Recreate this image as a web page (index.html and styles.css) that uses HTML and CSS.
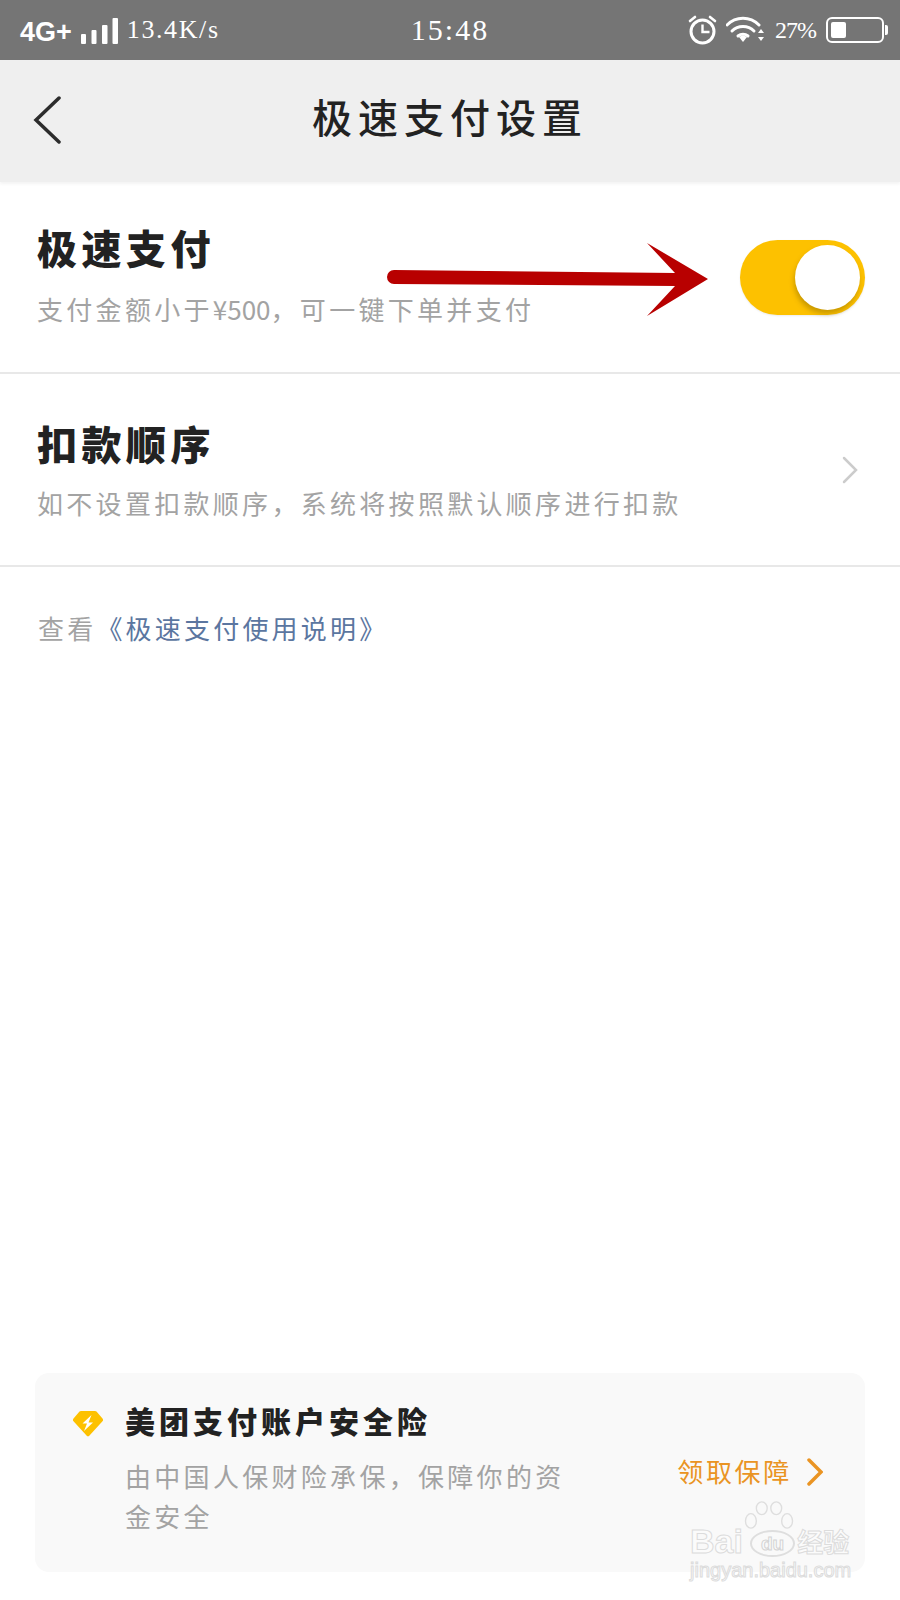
FILE: index.html
```html
<!DOCTYPE html>
<html lang="zh-CN">
  <head>
    <meta charset="UTF-8" />
    <meta name="viewport" content="width=device-width, initial-scale=1.0" />
    <title>极速支付设置</title>
    <link rel="stylesheet" href="styles.css">
  </head>
  <body>
    <!-- Status bar -->
    <div class="status-bar">
      <div class="status-left">
        <span class="network">4G+</span>
        <svg class="signal" width="37" height="26" viewBox="0 0 37 26">
          <rect x="0" y="16" width="5" height="10" rx="1" />
          <rect x="10.500" y="12" width="5" height="14" rx="1" />
          <rect x="21" y="7" width="5.500" height="19" rx="1" />
          <rect x="31.500" y="0" width="5.500" height="26" rx="1" />
        </svg>
        <span class="speed">13.4K/s</span>
      </div>
      <div class="clock">15:48</div>
      <div class="status-right">
        <svg class="alarm" width="29" height="30" viewBox="0 0 29 30" fill="none" stroke="#fff">
          <circle cx="14.5" cy="16.5" r="11.5" stroke-width="3" />
          <path d="M14.5 9.5v7.5h7" stroke-width="2.4" />
          <path d="M2 6l5-4M27 6l-5-4" stroke-width="2.6" stroke-linecap="round" />
        </svg>
        <svg class="wifi" width="38" height="28" viewBox="0 0 38 28" fill="none" stroke="#fff">
          <path d="M1 9c9-9 23-9 32 0" stroke-width="3" stroke-linecap="round" />
          <path d="M6 15c6-6 16-6 22 0" stroke-width="3" stroke-linecap="round" />
          <path d="M12 20c3-2.500 7-2.500 10 0" stroke-width="3" stroke-linecap="round" />
          <path d="M13 21l4-2 4 2-4 5z" fill="#fff" stroke="none" />
          <path d="M32 17l3-4 3 4zM32 21l3 4 3-4z" fill="#fff" stroke="none" />
        </svg>
        <span class="battery-text">27%</span>
        <div class="battery">
          <div class="battery-level"></div>
        </div>
      </div>
    </div>

    <!-- Title bar -->
    <div class="title-bar">
      <svg class="back" width="30" height="48" viewBox="0 0 30 48" fill="none" stroke="#2c2c2c" stroke-width="3.500" stroke-linecap="round">
        <path d="M26 2L3 24l23 22" />
      </svg>
      <h1>极速支付设置</h1>
    </div>

    <div class="setting-row row-first">
      <div>
        <div class="setting-title">极速支付</div>
        <div class="setting-desc">支付金额小于<span class="amount">¥500</span>，可一键下单并支付</div>
      </div>
      <div class="switch">
        <div class="knob"></div>
      </div>
    </div>

    <div class="setting-row row-second">
      <div>
        <div class="setting-title">扣款顺序</div>
        <div class="setting-desc">如不设置扣款顺序，系统将按照默认顺序进行扣款</div>
      </div>
      <svg class="row-arrow" width="16" height="28" viewBox="0 0 16 28" fill="none" stroke="#cccccc" stroke-width="2.500" stroke-linecap="round">
        <path d="M2 2l12 12L2 26" />
      </svg>
    </div>

    <div class="help-line">查看<a class="help-link">《极速支付使用说明》</a></div>

    <!-- Insurance card -->
    <div class="insure-card">
      <div class="insure-main">
        <div class="insure-head">
          <svg class="shield" width="32" height="27" viewBox="0 0 32 27">
            <path d="M9 1h14a2 2 0 0 1 1.500.6l6 7a2 2 0 0 1 0 2.600L17.500 25.500a2 2 0 0 1-3 0L1.500 11.200a2 2 0 0 1 0-2.600l6-7A2 2 0 0 1 9 1z" fill="#fdc100" />
            <path d="M19.500 5l-9 8.500h4.500l-3 7.500 9-8.500h-4.500z" fill="#fff" />
          </svg>
          <span class="insure-title">美团支付账户安全险</span>
        </div>
        <div class="insure-desc">由中国人保财险承保，保障你的资金安全</div>
      </div>
      <div class="insure-action">
        <span>领取保障</span>
        <svg class="action-arrow" width="16" height="30" viewBox="0 0 16 30" fill="none" stroke="#ea9423" stroke-width="3.500" stroke-linecap="round">
          <path d="M2 3l12 12L2 27" />
        </svg>
      </div>
    </div>

    <!-- Annotation arrow drawn over the screenshot -->
    <svg class="annotation" width="900" height="400" viewBox="0 0 900 400">
      <path d="M394 270L675 273L647 243L708 279L647 316L675 286L394 284a7 7 0 0 1 0-14z" fill="#b80000" />
    </svg>

    <!-- Watermark -->
    <div class="watermark">
      <svg class="paw" width="54" height="38" viewBox="0 0 56 42" fill="none" stroke="#dedede" stroke-width="1.500">
        <ellipse cx="8" cy="22" rx="6" ry="8" />
        <ellipse cx="20" cy="8" rx="6" ry="7" />
        <ellipse cx="36" cy="8" rx="6" ry="7" />
        <ellipse cx="48" cy="22" rx="6" ry="8" />
      </svg>
      <div class="wm-brand"><span>Bai</span><span class="wm-du">du</span><span class="wm-cn">经验</span></div>
      <div class="wm-url">jingyan.baidu.com</div>
    </div>
  </body>
</html>
```

FILE: styles.css
```css
* {
  box-sizing: border-box;
}

body {
  margin: 0;
  padding: 0;
  width: 900px;
  height: 1600px;
  position: relative;
  overflow: hidden;
  display: flex;
  flex-direction: column;
  background-color: #fff;
  font-family: "Noto Sans CJK SC", "Noto Sans", sans-serif;
}

/* Status bar */
.status-bar {
  height: 60px;
  flex-shrink: 0;
  padding: 0 14px;
  display: grid;
  grid-template-columns: 1fr auto 1fr;
  align-items: center;
  background-color: #757575;
  color: #fff;
}

.status-left,
.status-right {
  display: flex;
  align-items: center;
}

.status-right {
  justify-content: flex-end;
}

.network {
  margin-left: 6px;
  margin-top: 4px;
  font-family: "Liberation Sans", sans-serif;
  font-size: 27px;
  font-weight: bold;
}

.signal {
  fill: #fff;
  margin-left: 9px;
  margin-top: 2px;
}

.speed {
  font-family: "Liberation Serif", serif;
  font-size: 26px;
  margin-left: 9px;
  letter-spacing: 1.6px;
}

.clock {
  font-family: "Liberation Serif", serif;
  font-size: 30px;
  letter-spacing: 2px;
}

.wifi {
  margin-left: 9px;
}

.battery-text {
  font-family: "Liberation Serif", serif;
  font-size: 24px;
  letter-spacing: -1px;
  margin-left: 11px;
}

.battery {
  width: 58px;
  height: 26px;
  margin-left: 10px;
  margin-right: 2px;
  padding: 3px;
  position: relative;
  border: 2px solid #fff;
  border-radius: 6px;
}

.battery::after {
  content: "";
  position: absolute;
  right: -6px;
  top: 6px;
  width: 3px;
  height: 10px;
  border-radius: 0 2px 2px 0;
  background-color: #fff;
}

.battery-level {
  width: 15px;
  height: 100%;
  border-radius: 2px;
  background-color: #fff;
}

/* Title bar */
.title-bar {
  height: 122px;
  flex-shrink: 0;
  position: relative;
  display: flex;
  align-items: center;
  justify-content: center;
  padding-bottom: 10px;
  background-color: #efefef;
  box-shadow: 0 2px 3px rgba(0, 0, 0, 0.05);
}

.title-bar h1 {
  margin: 0;
  font-size: 40px;
  font-weight: 500;
  letter-spacing: 6px;
  color: #222;
}

.back {
  position: absolute;
  left: 33px;
  top: 36px;
}

/* Setting rows */
.setting-row {
  display: flex;
  align-items: flex-start;
  justify-content: space-between;
  border-bottom: 2px solid #e8e8e8;
}

.row-first {
  height: 192px;
  padding: 37px 35px 0 37px;
}

.row-first .setting-desc {
  margin-top: 17px;
}

.row-second {
  height: 193px;
  padding: 41px 42px 0 37px;
}

.setting-title {
  font-size: 40px;
  font-weight: 900;
  line-height: 56px;
  letter-spacing: 4.5px;
  color: #222;
}

.setting-desc {
  margin-top: 15px;
  font-size: 26px;
  line-height: 34px;
  letter-spacing: 3.3px;
  color: #a3a3a3;
}

.amount {
  letter-spacing: 0;
}

.switch {
  width: 125px;
  height: 75px;
  margin-top: 21px;
  padding: 5px;
  display: flex;
  justify-content: flex-end;
  border-radius: 38px;
  background-color: #fdc100;
  box-shadow: 0 1px 2px rgba(0, 0, 0, 0.08);
}

.knob {
  width: 65px;
  height: 65px;
  border-radius: 50%;
  background-color: #fff;
  box-shadow: -1px 4px 5px rgba(110, 80, 0, 0.35);
}

.row-arrow {
  margin-top: 41px;
}

.help-line {
  margin-top: 43px;
  padding-left: 38px;
  font-size: 26px;
  line-height: 36px;
  letter-spacing: 3.2px;
  color: #a3a3a3;
}

.help-link {
  color: #5b76a0;
}

/* Insurance card */
.insure-card {
  margin: auto 35px 28px;
  height: 199px;
  padding: 26px 42px 0 37px;
  display: flex;
  justify-content: space-between;
  border-radius: 14px;
  background-color: #f9f9f9;
}

.insure-main {
  width: 500px;
}

.insure-head {
  display: flex;
  align-items: center;
  gap: 21px;
}

.shield {
  margin-top: 6px;
}

.insure-title {
  font-size: 30px;
  font-weight: 900;
  line-height: 42px;
  letter-spacing: 4px;
  color: #222;
}

.insure-desc {
  margin-top: 15px;
  padding-left: 53px;
  font-size: 26px;
  line-height: 40px;
  letter-spacing: 3.3px;
  color: #a3a3a3;
}

.insure-action {
  margin-top: 53px;
  height: 36px;
  display: flex;
  align-items: center;
  gap: 15px;
  font-size: 26px;
  letter-spacing: 2.7px;
  color: #ea9423;
}

.action-arrow {
  margin-top: 4px;
}

/* Things lying over the page */
.annotation {
  position: absolute;
  left: 0;
  top: 0;
}

.watermark {
  position: absolute;
  left: 688px;
  top: 1500px;
  width: 170px;
  height: 82px;
}

.paw {
  position: absolute;
  left: 54px;
  top: 1px;
}

.wm-brand {
  position: absolute;
  left: 2px;
  top: 27px;
  height: 28px;
  display: flex;
  align-items: center;
  white-space: nowrap;
  font-family: "Liberation Sans", sans-serif;
  font-size: 34px;
  font-weight: bold;
  line-height: 28px;
  color: #fbfbfb;
  -webkit-text-stroke: 1px #dcdcdc;
}

.wm-du {
  margin-left: 7px;
  padding: 0 9px;
  font-size: 19px;
  line-height: 23px;
  margin-top: 4px;
  -webkit-text-stroke: 1px #d4d4d4;
  border: 2px solid #dedede;
  border-radius: 50%;
}

.wm-cn {
  margin-left: 2px;
  font-family: "Noto Sans CJK SC", sans-serif;
  font-size: 26px;
}

.wm-url {
  position: absolute;
  left: 2px;
  top: 59px;
  font-family: "Liberation Sans", sans-serif;
  font-size: 20px;
  line-height: 22px;
  white-space: nowrap;
  color: #fcfcfc;
  -webkit-text-stroke: 1px #dcdcdc;
}
```
